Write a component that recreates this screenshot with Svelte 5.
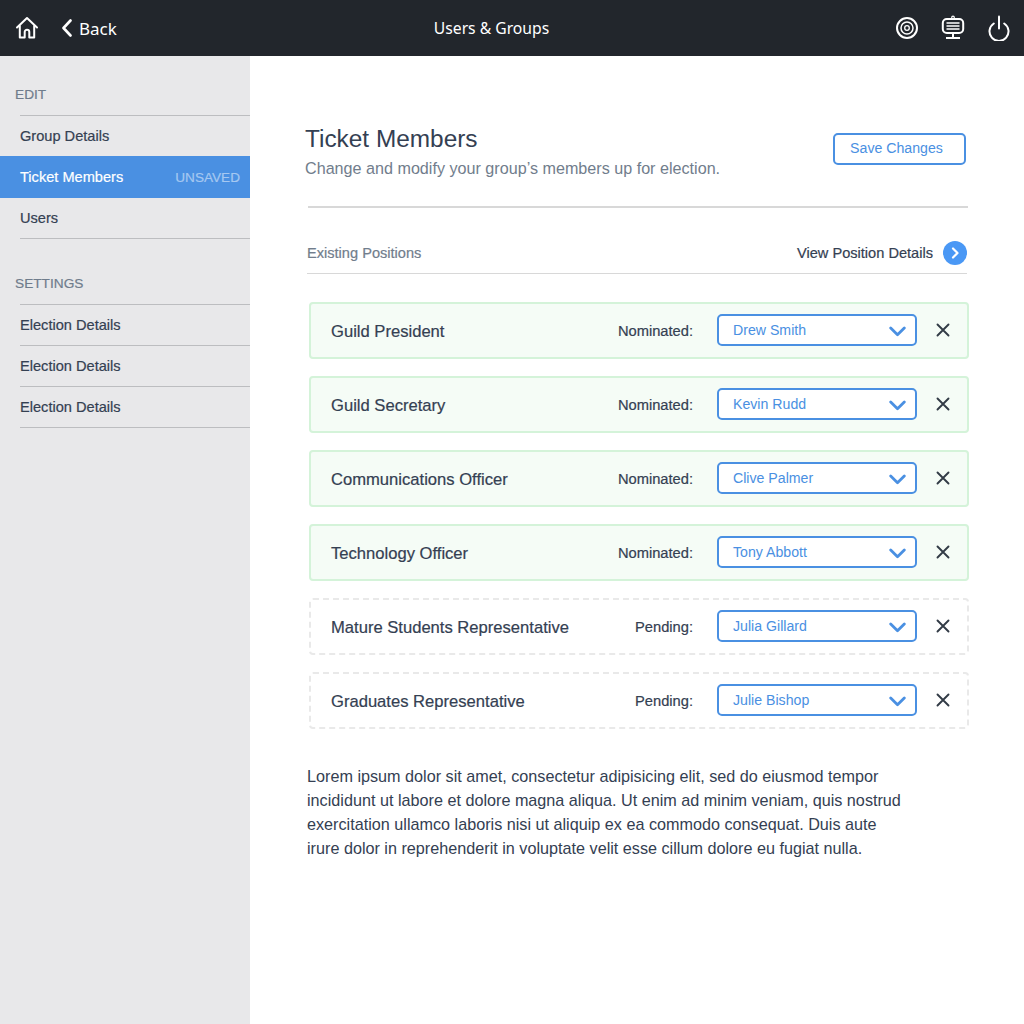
<script>
  const edit = [
    { label: "Group Details" },
    { label: "Ticket Members", active: true, note: "UNSAVED" },
    { label: "Users" }
  ];
  const settings = ["Election Details", "Election Details", "Election Details"];
  const positions = [
    { title: "Guild President", status: "Nominated:", who: "Drew Smith", ok: true },
    { title: "Guild Secretary", status: "Nominated:", who: "Kevin Rudd", ok: true },
    { title: "Communications Officer", status: "Nominated:", who: "Clive Palmer", ok: true },
    { title: "Technology Officer", status: "Nominated:", who: "Tony Abbott", ok: true },
    { title: "Mature Students Representative", status: "Pending:", who: "Julia Gillard", ok: false },
    { title: "Graduates Representative", status: "Pending:", who: "Julie Bishop", ok: false }
  ];
</script>

<div class="app">
  <header class="topbar">
    <div class="left">
      <svg class="home" width="24" height="24" viewBox="0 0 24 24" fill="none" stroke="#fff" stroke-width="2" stroke-linejoin="round" stroke-linecap="round">
        <path d="M2 11.500 12 2l10 9.500" />
        <path d="M4.800 10v11.500h4.900v-5.500a2.300 2.300 0 0 1 4.600 0v5.500h4.900V10" />
      </svg>
      <span class="back">
        <svg width="12" height="18" viewBox="0 0 12 18" fill="none" stroke="#fff" stroke-width="2.600" stroke-linecap="round" stroke-linejoin="round"><path d="M9.500 1.500 2.500 9l7 7.500" /></svg>
        Back
      </span>
    </div>
    <div class="heading">Users &amp; Groups</div>
    <div class="right">
      <svg width="24" height="24" viewBox="0 0 24 24" fill="none" stroke="#fff">
        <circle cx="12" cy="12" r="10" stroke-width="2" />
        <circle cx="12" cy="12" r="6" stroke-width="1.500" />
        <circle cx="12" cy="12" r="2.300" stroke-width="1.300" />
      </svg>
      <svg width="24" height="26" viewBox="0 0 24 26" fill="none" stroke="#fff" stroke-width="1.600">
        <circle cx="12" cy="2.500" r="1.300" stroke-width="1.200" />
        <rect x="1.800" y="4" width="20.400" height="14" rx="4" stroke-width="2" />
        <path d="M5.500 8h13M5.500 11h13M5.500 14h13" stroke-width="1.300" />
        <path d="M12 18v5M5 23h14" stroke-width="2" />
      </svg>
      <svg class="power" width="22" height="26" viewBox="0 0 22 26" fill="none" stroke="#fff" stroke-width="2" stroke-linecap="round">
        <path d="M11 1.500v12" />
        <path d="M5.800 8.500a9.500 9.500 0 1 0 10.400 0" />
      </svg>
    </div>
  </header>

  <div class="body">
    <aside class="sidebar">
      <h4>EDIT</h4>
      <ul>
        {#each edit as item}
          <li class:active={item.active}>
            <span>{item.label}</span>
            {#if item.note}<em>{item.note}</em>{/if}
          </li>
        {/each}
      </ul>
      <h4 class="second">SETTINGS</h4>
      <ul>
        {#each settings as label}
          <li><span>{label}</span></li>
        {/each}
      </ul>
    </aside>

    <main class="content">
      <div class="title-row">
        <div>
          <h1>Ticket Members</h1>
          <p class="sub">Change and modify your group’s members up for election.</p>
        </div>
        <button class="save" type="button">Save Changes</button>
      </div>

      <div class="section-head">
        <span class="existing">Existing Positions</span>
        <span class="view">
          View Position Details
          <svg width="24" height="24" viewBox="0 0 24 24" fill="none">
            <circle cx="12" cy="12" r="12" fill="#4a98f5" />
            <path d="M10 7.500 14.500 12 10 16.500" stroke="#fff" stroke-width="2.200" stroke-linecap="round" stroke-linejoin="round" />
          </svg>
        </span>
      </div>

      <div class="rows">
        {#each positions as p}
          <div class="row" class:ok={p.ok}>
            <span class="name">{p.title}</span>
            <span class="status">{p.status}</span>
            <div class="select">
              <span>{p.who}</span>
              <svg width="17" height="11" viewBox="0 0 17 11" fill="none" stroke="#4a90e2" stroke-width="2.800" stroke-linecap="round" stroke-linejoin="round"><path d="M1.700 2l6.800 6.800L15.300 2" /></svg>
            </div>
            <svg class="close" width="14" height="14" viewBox="0 0 14 14" fill="none" stroke="#323b46" stroke-width="1.900" stroke-linecap="round"><path d="M1.500 1.500l11 11M12.500 1.500l-11 11" /></svg>
          </div>
        {/each}
      </div>

      <p class="lorem">
        Lorem ipsum dolor sit amet, consectetur adipisicing elit, sed do eiusmod tempor<br />
        incididunt ut labore et dolore magna aliqua. Ut enim ad minim veniam, quis nostrud<br />
        exercitation ullamco laboris nisi ut aliquip ex ea commodo consequat. Duis aute<br />
        irure dolor in reprehenderit in voluptate velit esse cillum dolore eu fugiat nulla.
      </p>
    </main>
  </div>
</div>

<style>
  :global(body) {
    margin: 0;
    background: #fff;
  }

  .app {
    width: 1024px;
    height: 1024px;
    overflow: hidden;
    display: flex;
    flex-direction: column;
    font-family: "Liberation Sans", Arial, sans-serif;
    color: #344052;
  }

  .topbar {
    height: 56px;
    flex: none;
    background: #22262c;
    color: #fff;
    display: grid;
    grid-template-columns: 1fr auto 1fr;
    align-items: center;
    padding: 0 14px 0 15px;
    box-sizing: border-box;
  }

  .left {
    display: flex;
    align-items: center;
    gap: 22px;
  }

  .back {
    display: flex;
    align-items: center;
    gap: 6px;
    font-family: "Noto Sans", sans-serif;
    font-size: 17px;
  }

  .heading {
    font-family: "Noto Sans", sans-serif;
    font-size: 15.700px;
    position: relative;
    left: -21px;
  }

  .right {
    display: flex;
    justify-content: flex-end;
    align-items: center;
    gap: 22px;
  }

  .power {
    margin-left: 1px;
  }

  .body {
    flex: 1;
    display: flex;
  }

  .sidebar {
    width: 250px;
    flex: none;
    background: #e8e8ea;
    box-sizing: border-box;
    padding-top: 30px;
  }

  h4 {
    margin: 0;
    padding-left: 15px;
    height: 29px;
    line-height: 18px;
    font-size: 13.700px;
    font-weight: normal;
    color: #6f7c8c;
    -webkit-text-stroke: 0.2px #6f7c8c;
  }

  h4.second {
    margin-top: 36px;
  }

  ul {
    list-style: none;
    margin: 0 0 0 20px;
    padding: 0;
    border-top: 1px solid #bcbdc0;
  }

  li {
    height: 41px;
    box-sizing: border-box;
    border-bottom: 1px solid #bcbdc0;
    display: flex;
    align-items: center;
    justify-content: space-between;
    font-size: 14.600px;
    color: #344052;
    -webkit-text-stroke: 0.2px currentColor;
  }

  li.active {
    margin-left: -20px;
    padding: 0 10px 0 20px;
    height: 42px;
    margin-top: -1px;
    background: #4a90e2;
    color: #fff;
    border-bottom: 0;
  }

  li em {
    font-style: normal;
    font-size: 13.600px;
    color: #a5c8f1;
  }

  .content {
    flex: 1;
    box-sizing: border-box;
    padding: 69px 55px 0 55px;
  }

  .title-row {
    display: flex;
    justify-content: space-between;
    align-items: flex-start;
    margin-right: 3px;
    height: 81px;
  }

  h1 {
    margin: 0;
    font-size: 24.400px;
    line-height: 28px;
    font-weight: normal;
    color: #344052;
  }

  .sub {
    margin: 5px 0 0;
    font-size: 16.150px;
    line-height: 20px;
    color: #717d8c;
  }

  .save {
    width: 133px;
    height: 32px;
    margin-top: 8px;
    padding: 0 6px 3px 0;
    background: #fff;
    border: 2px solid #4a90e2;
    border-radius: 5px;
    color: #4a90e2;
    font: 14.150px "Liberation Sans", Arial, sans-serif;
  }

  .section-head {
    margin-left: 3px;
    margin-right: 1px;
    border-top: 2px solid #d8d8d8;
    height: 68px;
    box-sizing: border-box;
    display: flex;
    justify-content: space-between;
    align-items: center;
    padding-top: 23px;
    position: relative;
  }

  .section-head::after {
    content: "";
    position: absolute;
    left: -1px;
    right: 1px;
    bottom: 0;
    border-bottom: 1px solid #d8d8d8;
  }

  .existing {
    font-size: 14.600px;
    color: #717d8c;
    margin-left: -1px;
    -webkit-text-stroke: 0.2px #717d8c;
  }

  .view {
    display: flex;
    align-items: center;
    gap: 10px;
    font-size: 14.600px;
    margin-right: 1px;
    -webkit-text-stroke: 0.2px currentColor;
  }

  .rows {
    margin-top: 28px;
    margin-left: 4px;
    display: flex;
    flex-direction: column;
    gap: 17px;
  }

  .row {
    height: 57px;
    box-sizing: border-box;
    border: 2px dashed #e9e9e9;
    border-radius: 4px;
    display: flex;
    align-items: center;
    padding: 0 17px 0 20px;
  }

  .row.ok {
    border: 2px solid #d4f3d9;
    background: #f5fcf6;
  }

  .name {
    flex: 1;
    font-size: 16.600px;
    padding-top: 3px;
    -webkit-text-stroke: 0.2px currentColor;
  }

  .status {
    font-size: 14.700px;
    margin-right: 24px;
    -webkit-text-stroke: 0.2px currentColor;
  }

  .select {
    width: 200px;
    height: 32px;
    margin-top: -1px;
    box-sizing: border-box;
    border: 2px solid #4a90e2;
    border-radius: 5px;
    background: #fff;
    color: #4a90e2;
    font-size: 14.150px;
    display: flex;
    align-items: center;
    justify-content: space-between;
    padding: 0 9px 0 14px;
  }

  .select svg {
    margin-top: 2px;
  }

  .close {
    margin-left: 19px;
    margin-top: -1px;
  }

  .lorem {
    margin: 35px 0 0 2px;
    font-size: 16.200px;
    line-height: 24px;
    color: #344052;
    white-space: nowrap;
  }
</style>
